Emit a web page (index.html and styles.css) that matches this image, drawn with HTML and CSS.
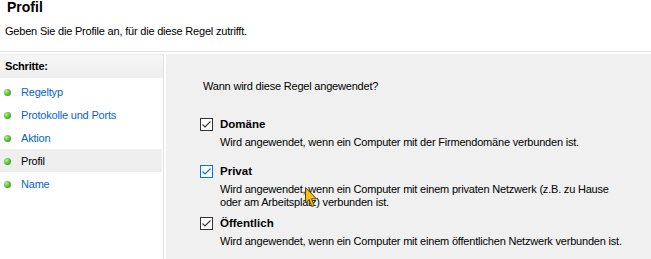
FILE: index.html
```html
<!DOCTYPE html>
<html lang="de">
<head>
    <meta charset="UTF-8">
    <meta name="viewport" content="width=device-width, initial-scale=1.0">
    <title>Profil</title>

    <link rel="stylesheet" href="styles.css">
</head>
<body>
<div class="page-head">
    <h1>Profil</h1>
    <p class="subtitle">Geben Sie die Profile an, für die diese Regel zutrifft.</p>
</div>

<div class="wizard">
    <div class="steps-col">
        <div class="steps">
            <div class="steps-title">Schritte:</div>
            <ul class="step-list">
                <li class="step"><span class="dot"></span><a href="#">Regeltyp</a></li>
                <li class="step"><span class="dot"></span><a href="#">Protokolle und Ports</a></li>
                <li class="step"><span class="dot"></span><a href="#">Aktion</a></li>
                <li class="step current"><span class="dot"></span><span>Profil</span></li>
                <li class="step"><span class="dot"></span><a href="#">Name</a></li>
            </ul>
        </div>
    </div>

    <div class="pane">
        <p class="question">Wann wird diese Regel angewendet?</p>

        <div class="option opt-domain">
            <label class="opt-head">
                <span class="check">
                    <svg viewBox="0 0 13 13" width="13" height="13"><path d="M2.5 6.5 L5 9 L10.5 3.5" fill="none" stroke="#333" stroke-width="1.1"/></svg>
                </span>
                Domäne
            </label>
            <p class="opt-desc">Wird angewendet, wenn ein Computer mit der Firmendomäne verbunden ist.</p>
        </div>

        <div class="option opt-private">
            <label class="opt-head">
                <span class="check hover">
                    <svg viewBox="0 0 13 13" width="13" height="13"><path d="M2.5 6.5 L5 9 L10.5 3.5" fill="none" stroke="#0078d7" stroke-width="1.1"/></svg>
                </span>
                Privat
            </label>
            <p class="opt-desc">Wird angewendet, wenn ein Computer mit einem privaten Netzwerk (z.B. zu Hause<br>oder am Arbeitsplatz) verbunden ist.</p>
        </div>

        <div class="option opt-public">
            <label class="opt-head">
                <span class="check">
                    <svg viewBox="0 0 13 13" width="13" height="13"><path d="M2.5 6.5 L5 9 L10.5 3.5" fill="none" stroke="#333" stroke-width="1.1"/></svg>
                </span>
                Öffentlich
            </label>
            <p class="opt-desc">Wird angewendet, wenn ein Computer mit einem öffentlichen Netzwerk verbunden ist.</p>
        </div>

        <!-- mouse pointer over the Privat text -->
        <svg class="cursor" viewBox="0 0 13 21" width="13" height="21">
            <path d="M0.5 0.5 L0.5 16 L4 12.5 L6.8 19.5 L9.2 18.5 L6.5 11.8 L11.5 11.8 Z" fill="#f4c20d" stroke="#5a4300" stroke-width="1"/>
        </svg>
    </div>
</div>
</body>
</html>
```

FILE: styles.css
```css
* {
    box-sizing: border-box;
    margin: 0;
    padding: 0;
}
body {
    font-family: "Liberation Sans", Arial, sans-serif;
    font-size: 11px;
    letter-spacing: -0.2px;
    color: #000;
    background-color: #fff;
    width: 651px;
    height: 259px;
    overflow: hidden;
}
.page-head {
    height: 52px;
    border-bottom: 1px solid #e3e3e3;
}
h1 {
    font-size: 14px;
    font-weight: bold;
    letter-spacing: 0;
    line-height: 14px;
    padding: 0 0 0 7px;
}
.subtitle {
    line-height: 13px;
    padding-left: 5px;
    margin-top: 11px;
}
.wizard {
    display: flex;
    height: 207px;
    padding-top: 2px;
}
.steps-col {
    width: 166px;
    flex-shrink: 0;
}
.steps {
    width: 164px;
    height: 100%;
    border-top: 1px solid #ececec;
    border-right: 1px solid #e0e0e0;
}
.steps-title {
    height: 23px;
    line-height: 23px;
    padding-left: 5px;
    font-weight: bold;
    background: linear-gradient(#f7f7f7, #eeeeee);
}
.step-list {
    list-style: none;
    margin-top: 2px;
}
.step {
    display: flex;
    align-items: center;
    height: 23px;
    padding-left: 4px;
    margin-right: 1px;
}
.step.current {
    background-color: #efefef;
}
.step a {
    color: #0a62d0;
    text-decoration: none;
}
.dot {
    width: 7px;
    height: 7px;
    border-radius: 50%;
    margin: 1px 10px 0 0;
    background: radial-gradient(circle at 35% 35%, #b6f08a, #4fb82a 55%, #2f8a17);
}
.pane {
    position: relative;
    flex: 1;
    background-color: #f0f0f0;
    padding: 25px 0 0 37px;
}
.question {
    line-height: 14px;
}
.opt-head {
    display: flex;
    align-items: center;
    gap: 7px;
    height: 14px;
    font-weight: bold;
    font-size: 11.5px;
    letter-spacing: 0;
    margin-left: -3px;
}
.check {
    width: 13px;
    height: 13px;
    border: 1px solid #333;
    background-color: #fff;
    display: flex;
}
.check svg {
    margin: -1px;
}
.check.hover {
    border-color: #0078d7;
}
.opt-desc {
    line-height: 13px;
    padding-left: 17px;
    margin-top: 5px;
}
.opt-domain {
    margin-top: 24px;
}
.opt-private {
    margin-top: 15px;
}
.opt-public {
    margin-top: 7px;
}
.cursor {
    position: absolute;
    left: 139px;
    top: 133px;
}
```
